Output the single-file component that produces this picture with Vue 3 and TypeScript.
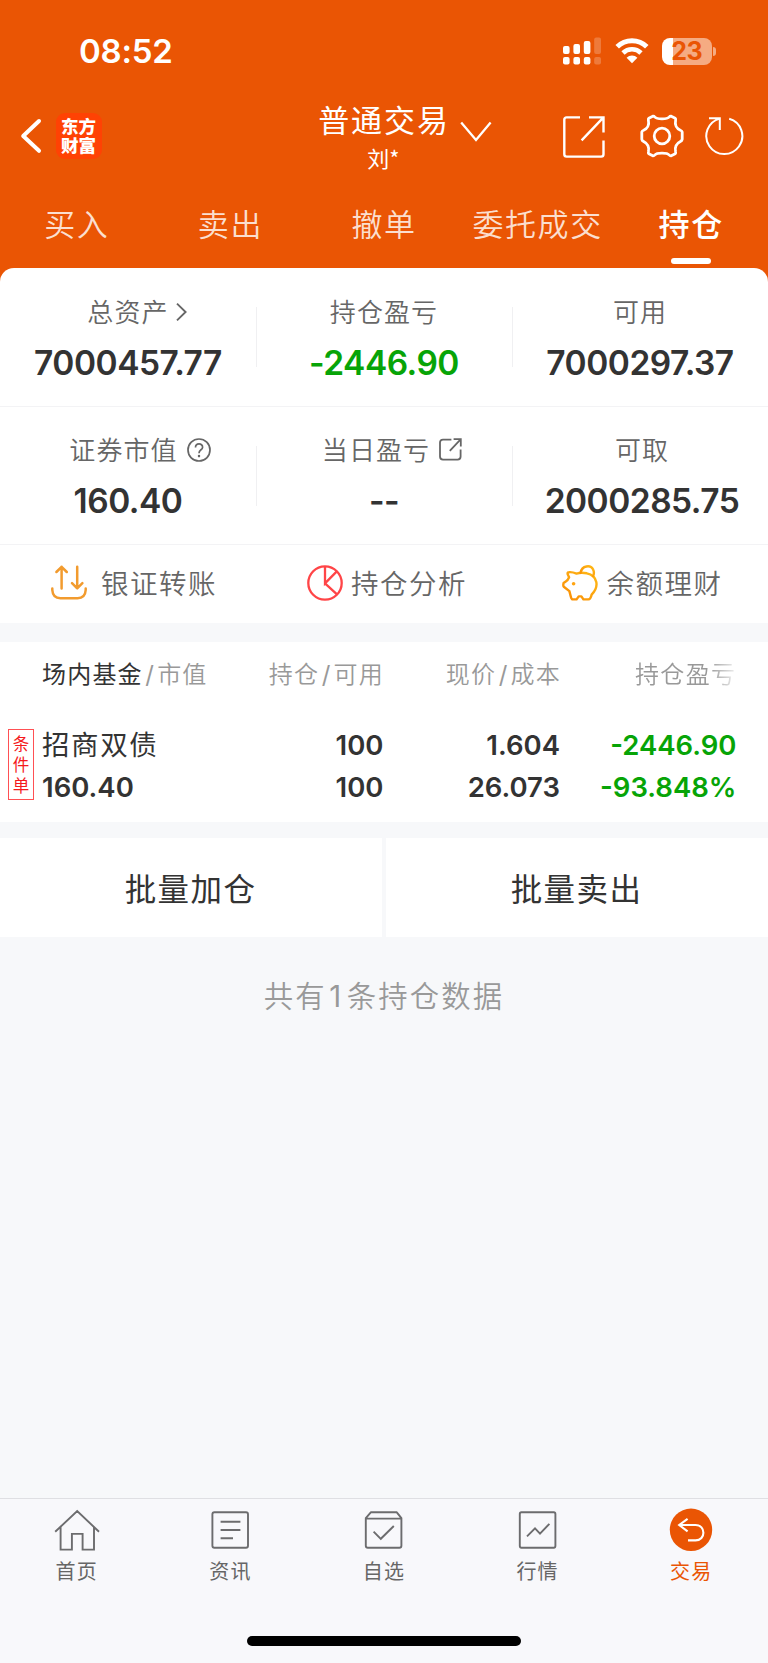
<script setup lang="ts">
interface Cell { label: string; value: string; icon?: 'chevron' | 'help' | 'open'; down?: boolean; cls: string }

const tabs: string[] = ['买入', '卖出', '撤单', '委托成交', '持仓']
const activeTab = '持仓'

const rows: Cell[][] = [
  [
    { label: '总资产', value: '7000457.77', icon: 'chevron', cls: 'c-total' },
    { label: '持仓盈亏', value: '-2446.90', down: true, cls: 'c-profit' },
    { label: '可用', value: '7000297.37', cls: 'c-avail' },
  ],
  [
    { label: '证券市值', value: '160.40', icon: 'help', cls: 'c-market' },
    { label: '当日盈亏', value: '--', icon: 'open', cls: 'c-today' },
    { label: '可取', value: '2000285.75', cls: 'c-draw' },
  ],
]

const badge: string[] = ['条', '件', '单']
const nav: { id: string; label: string }[] = [
  { id: 'home', label: '首页' },
  { id: 'news', label: '资讯' },
  { id: 'pick', label: '自选' },
  { id: 'market', label: '行情' },
  { id: 'trade', label: '交易' },
]
</script>

<template>
  <div class="page">
    <header class="top">
      <div class="status">
        <span class="time">08:52</span>
        <div class="status-icons">
          <svg class="signal" width="39" height="28" viewBox="0 0 39 28" fill="#fff">
            <rect x="0" y="9" width="6.6" height="8" rx="2" />
            <rect x="10.4" y="7" width="6.6" height="10" rx="2" />
            <rect x="20.8" y="4" width="6.6" height="13" rx="2" />
            <rect x="0" y="20" width="6.6" height="7.6" rx="2" />
            <rect x="10.4" y="20" width="6.6" height="7.6" rx="2" />
            <rect x="20.8" y="20" width="6.6" height="7.6" rx="2" />
            <g opacity=".22">
              <rect x="31.2" y="0.4" width="6.8" height="16.6" rx="2" />
              <rect x="31.2" y="20" width="6.8" height="7.6" rx="2" />
            </g>
          </svg>
          <svg class="wifi" width="34" height="26" viewBox="0 0 34 26">
            <path d="M2.2 8.8A21 21 0 0 1 31.8 8.8" fill="none" stroke="#fff" stroke-width="5" />
            <path d="M8 15A12.8 12.8 0 0 1 26 15" fill="none" stroke="#fff" stroke-width="4.6" />
            <path d="M17 25.2L11.6 19.8A7.7 7.7 0 0 1 22.4 19.8Z" fill="#fff" />
          </svg>
          <div class="battery"><span>23</span></div>
          <i class="nub"></i>
        </div>
      </div>

      <div class="bar">
        <svg class="back" width="22" height="36" viewBox="0 0 22 36" fill="none" stroke="#fff" stroke-width="4" stroke-linecap="round" stroke-linejoin="round">
          <path d="M19 3L3.2 18L19 32.8" />
        </svg>
        <div class="logo"><span>东方<br>财富</span></div>
        <div class="account">
          <span class="account-name">普通交易</span>
          <span class="account-user">刘*</span>
        </div>
        <svg class="down" width="32" height="22" viewBox="0 0 32 22" fill="none" stroke="#fff" stroke-width="2.3">
          <path d="M1.2 1.4L16 19L30.6 1.4" />
        </svg>
        <svg class="share" width="42" height="42" viewBox="0 0 42 42" fill="none" stroke="#fff" stroke-width="2.4">
          <path d="M17 1.4H3.6Q1.3 1.4 1.3 3.7V38.3Q1.3 40.6 3.6 40.6H38.2Q40.5 40.6 40.5 38.3V24.4" />
          <path d="M26 1.4H40.5V16.6M40.5 1.4L18.6 24.4" />
        </svg>
        <svg class="gear" width="46" height="46" viewBox="-23 -23 46 46" fill="none" stroke="#fff" stroke-width="2.8" stroke-linejoin="round">
          <path d="M-13.2 -17.8L-9.2 -19.8Q-8 -20 -7.2 -19C-5.2 -16.4 5.2 -16.4 7.2 -19Q8 -20 9.2 -19.8L13.2 -17.8Q14 -17 13.6 -15.6C12.6 -11.2 14.6 -7.4 18.4 -5.8Q20 -5.2 20.2 -4V3.2Q20 4.6 18.4 5.4C14.6 7.4 12.6 11.2 13.6 15.6Q14 17 13.2 17.8L9.2 19.8Q8 20 7.2 19C5.2 16.4 -5.2 16.4 -7.2 19Q-8 20 -9.2 19.8L-13.2 17.8Q-14 17 -13.6 15.6C-12.6 11.2 -14.6 7.4 -18.4 5.4Q-20 4.6 -20.2 3.2V-4Q-20 -5.2 -18.4 -5.8C-14.6 -7.4 -12.6 -11.2 -13.6 -15.6Q-14 -17 -13.2 -17.8Z" />
          <circle r="7.8" />
        </svg>
        <svg class="refresh" width="40" height="42" viewBox="-20 -21 40 42" fill="none" stroke="#fff" stroke-width="2">
          <path d="M4.2 -17.3A18 18 0 1 1 -5.2 -17.4M-16 -17.7H-5.2V-6" />
        </svg>
      </div>

      <nav class="tabs">
        <div v-for="t in tabs" :key="t" class="tab" :class="{ active: t === activeTab }"><span>{{ t }}</span></div>
      </nav>
    </header>

    <section class="summary">
      <div class="card">
        <div v-for="(row, i) in rows" :key="i" class="row">
          <div v-for="c in row" :key="c.label" class="cell" :class="c.cls">
            <div class="label">
              <span>{{ c.label }}</span>
              <svg v-if="c.icon === 'chevron'" class="i-chev" width="12" height="20" viewBox="0 0 12 20" fill="none" stroke="#666" stroke-width="1.9">
                <path d="M1 1.6L9.6 10L1 18.4" />
              </svg>
              <svg v-else-if="c.icon === 'help'" class="i-help" width="24" height="24" viewBox="0 0 24 24" fill="none" stroke="#666" stroke-width="1.7">
                <circle cx="12" cy="12" r="11" />
                <path d="M8.5 9.6C8.5 4.6 15.6 4.9 15.6 9.2C15.6 12 12 11.6 12 15.2" />
                <path d="M12 16.9V19.2" stroke-width="2.2" />
              </svg>
              <svg v-else-if="c.icon === 'open'" class="i-open" width="23" height="23" viewBox="0 0 23 23" fill="none" stroke="#666" stroke-width="1.8">
                <path d="M12.4 1.6H4Q1 1.6 1 4.6V18.6Q1 21.6 4 21.6H18.6Q21.6 21.6 21.6 18.6V11.4M14.6 1.2H21.8V8.4M21.6 1.4L10.8 12.8" />
              </svg>
            </div>
            <div class="value" :class="{ green: c.down }">{{ c.value }}</div>
          </div>
        </div>
        <div class="actions">
          <div class="action a1">
            <svg width="36" height="36" viewBox="0 0 36 36" fill="none" stroke="#f29b2e" stroke-width="2.5" stroke-linecap="round" stroke-linejoin="round">
              <path d="M1.3 23.4V25Q1.8 33.2 9.4 33.2H26.6Q34.2 33.2 34.7 25V23.4M10.6 23.4V1.8M5.4 7L10.6 1.8L15.8 7M26.2 1.8V23.2M21 18.2L26.2 23.4L31.4 18.2" />
            </svg>
            <span>银证转账</span>
          </div>
          <div class="action a2">
            <svg width="36" height="36" viewBox="0 0 36 36" fill="none" stroke="#ff4547" stroke-width="2.3">
              <circle cx="18" cy="18" r="16.7" />
              <path d="M18 1.4V18.4L29.8 6.4M18 18.4L30 29.4" />
            </svg>
            <span>持仓分析</span>
          </div>
          <div class="action a3">
            <svg width="36" height="36" viewBox="0 0 36 36" fill="none" stroke="url(#pig)" stroke-width="2.4" stroke-linecap="round" stroke-linejoin="round">
              <defs>
                <linearGradient id="pig" x1="0" y1="1" x2="1" y2="0"><stop stop-color="#f98c05" /><stop offset="1" stop-color="#ffba17" /></linearGradient>
              </defs>
              <path d="M7 7.2Q5.2 7.2 5.7 9.2L7.1 12.2Q5.8 15.3 4.1 16.3L1.6 18Q.9 20.6 1.8 21.7L7.4 26.1L8.7 31.2Q9.4 34.4 10.8 34.4H14.6L16.7 31.4H19.4L21.4 34.4H26.3Q28.7 34.2 29.6 29.7C37.5 21.6 35.8 10.8 24.8 8.3C20.6 7.5 17.8 7.6 14.5 8.6Q10.4 6.9 7 7.2Z" />
              <path d="M18.6 7.7C20 .2 28.6 -.2 31 4.2Q32.8 7.8 31 11.1" />
              <circle cx="11.6" cy="18.7" r="1.8" fill="#ffa411" stroke="none" />
            </svg>
            <span>余额理财</span>
          </div>
        </div>
      </div>
    </section>

    <section class="holdings">
      <div class="thead">
        <span class="col first"><b>场内基金</b><i>/</i>市值</span>
        <span class="col">持仓<i>/</i>可用</span>
        <span class="col">现价<i>/</i>成本</span>
        <span class="col fade">持仓盈亏</span>
      </div>
      <div class="holding">
        <div class="badge"><span v-for="b in badge" :key="b">{{ b }}</span></div>
        <div class="pair first"><span class="name">招商双债</span><span>160.40</span></div>
        <div class="pair"><span>100</span><span>100</span></div>
        <div class="pair"><span>1.604</span><span>26.073</span></div>
        <div class="pair green"><span>-2446.90</span><span>-93.848%</span></div>
      </div>
    </section>

    <section class="batch">
      <button type="button">批量加仓</button>
      <button type="button">批量卖出</button>
    </section>

    <p class="count">共有<span>1</span>条持仓数据</p>

    <footer class="bottom">
      <div class="menu">
        <div v-for="n in nav" :key="n.id" class="item" :class="n.id">
          <svg width="46" height="46" viewBox="0 0 46 46" fill="none" stroke="#6c6c6e" stroke-width="1.9">
            <path v-if="n.id === 'home'" d="M1.2 24.8L23.2 4L45 24.8M6.6 20.2V42.6H17.9V26.9H28.6V42.6H40V20.2" />
            <g v-else-if="n.id === 'news'">
              <rect x="5.4" y="5.3" width="35.6" height="35.4" rx="2" />
              <path d="M13.6 14.8H33.4M13.6 23H33.4M13.6 31.2H26" />
            </g>
            <g v-else-if="n.id === 'pick'">
              <path d="M9.8 5.3H35.8L40.4 11.2V38.7Q40.4 40.7 38.4 40.7H6.8Q4.8 40.7 4.8 38.7V11.2ZM4.8 11.6H40.4" stroke-linejoin="round" />
              <path d="M12.6 24.6L19.8 31.8L32.8 19" />
            </g>
            <g v-else-if="n.id === 'market'">
              <rect x="4.8" y="5.3" width="35.6" height="35.4" rx="1.6" />
              <path d="M12 29.4L20 21.4L25 26.6L34.4 16.8" />
            </g>
            <g v-else>
              <circle cx="23" cy="22.8" r="21.2" fill="#ea5504" stroke="none" />
              <path d="M19.6 11.8L11.2 18L19.6 24.4M11.6 18H27.6C38 18 38 33.4 27.6 33.4H20" stroke="#fff" stroke-width="2.1" />
            </g>
          </svg>
          <span>{{ n.label }}</span>
        </div>
      </div>
      <div class="home-bar"></div>
    </footer>
  </div>
</template>

<style>
html, body { margin: 0; background: #f7f8fa; }
</style>

<style scoped>
.page {
  width: 768px;
  height: 1663px;
  display: flex;
  flex-direction: column;
  overflow: hidden;
  background: #f7f8fa;
  font-family: "Noto Sans CJK SC", sans-serif;
  color: #333;
}
svg { display: block; flex: none; }
.top { height: 268px; background: #ea5504; color: #fff; flex: none; }
.status { height: 102px; display: flex; justify-content: space-between; align-items: center; padding: 0 52px 0 79px; box-sizing: border-box; }
.time { font: 600 33px/40px Inter, sans-serif; letter-spacing: -.2px; }
.status-icons { display: flex; align-items: center; }
.wifi { margin: 0 13.5px 0 13px; }
.battery {
  width: 49.5px; height: 27px; border-radius: 8px;
  background: linear-gradient(90deg, #fff 11.5px, #f5ab82 11.5px);
  display: flex; align-items: center; justify-content: center;
}
.battery span { font: 700 25px/27px Inter, sans-serif; color: #ea5504; letter-spacing: -.4px; }
.nub { width: 3px; height: 9px; border-radius: 0 4px 4px 0; background: #f5ab82; margin-left: 1.5px; }
.signal { margin-left: -1px; }

.bar { height: 78px; display: flex; align-items: center; padding: 0 0 0 20px; box-sizing: border-box; position: relative; top: -5px; }
.logo {
  width: 46px; height: 46px; margin-left: 13.5px; margin-top: -1px; border-radius: 9px; background: #ff4204;
  display: flex; align-items: center; justify-content: center;
  font: 900 17.5px/19px "Noto Sans CJK SC", sans-serif; flex: none;
}
.logo span { margin-top: -2px; }
.account { display: flex; flex-direction: column; align-items: center; margin-left: 216.5px; width: 132px; flex: none; }
.account-name { font-size: 31px; line-height: 40px; letter-spacing: 1.9px; white-space: nowrap; }
.account-user { font-size: 22px; line-height: 32px; margin-top: 2px; padding-right: 1px; }
.down { margin: -8px 0 0 9.5px; }
.share { margin-left: 71px; margin-top: 2px; }
.gear { margin-left: 34.5px; }
.refresh { margin-left: 19.5px; }

.tabs { display: flex; height: 88px; }
.tab { flex: 1; display: flex; flex-direction: column; align-items: center; padding-top: 21px; box-sizing: border-box; color: rgba(255, 255, 255, .82); font-size: 31px; letter-spacing: 1.6px; line-height: 44px; font-weight: 350; }
.tab.active { color: #fff; font-weight: 500; }
.tab.active::after { content: ''; width: 40px; height: 6px; border-radius: 3px; background: #fff; margin-top: 13px; }

.summary { background: linear-gradient(#ea5504 20px, #fff 20px); flex: none; }
.card { background: #fff; border-radius: 14px 14px 0 0; height: 355px; }
.row { display: flex; height: 139px; border-bottom: 1px solid #f3f3f5; box-sizing: border-box; }
.row + .row { height: 138px; }
.cell { width: 256px; height: 100%; display: flex; flex-direction: column; align-items: center; padding-top: 24px; box-sizing: border-box; position: relative; }
.row + .row .cell { padding-top: 23px; }
.cell + .cell::before { content: ''; position: absolute; left: 0; top: 39px; width: 1px; height: 60px; background: #f0f0f2; }
.label { display: flex; align-items: center; height: 38px; font-size: 26px; line-height: 38px; letter-spacing: 1.1px; color: #666; font-weight: 350; }
.value { font: 600 33.5px/40px Inter, sans-serif; letter-spacing: -.5px; margin-top: 13px; }
.green { color: #07a407; }
.i-chev { margin: 1px 1px 0 7px; }
.i-help { margin-left: 9px; margin-top: 1px; }
.i-open { margin-left: 9px; margin-top: 1px; }
.c-total .label { padding-left: 20px; }
.c-market .label { padding-left: 24px; }
.c-today .label { padding-left: 16px; }
.c-draw { padding-left: 4px; }

.actions { display: flex; height: 76px; }
.action { width: 256px; display: flex; align-items: center; font-size: 27.5px; letter-spacing: 1.5px; color: #666; box-sizing: border-box; font-weight: 350; }
.action span { line-height: 40px; margin-top: -3px; }
.a1 { padding-left: 50.5px; gap: 14.5px; }
.a2 { padding-left: 50.5px; gap: 8.5px; }
.a3 { padding-left: 49.5px; gap: 9px; }

.holdings { margin-top: 19px; height: 180px; background: #fff; flex: none; }
.thead { display: flex; height: 64px; align-items: center; padding: 0 0 4px 42px; box-sizing: border-box; font-size: 24px; letter-spacing: 1.2px; color: #999; font-weight: 350; }
.thead b { color: #333; font-weight: 400; }
.thead i { font: 400 24px/30px Inter, sans-serif; margin: 0 2px 0 2.5px; }
.thead .col { width: 177px; text-align: right; white-space: nowrap; }
.thead .first { width: 165px; text-align: left; }
.thead .fade { width: 175.5px; letter-spacing: 1.4px; -webkit-mask-image: linear-gradient(90deg, #000 148px, transparent 180px); mask-image: linear-gradient(90deg, #000 148px, transparent 180px); }
.holding { display: flex; height: 116px; }
.badge {
  width: 26px; height: 71px; margin: 23px 0 0 8px; box-sizing: border-box; border: 1px solid #ff5053; color: #f5191d;
  display: flex; flex-direction: column; align-items: center; justify-content: center; font-size: 16.5px; line-height: 21px; flex: none;
}
.pair { width: 176.5px; display: flex; flex-direction: column; align-items: flex-end; padding-top: 18px; box-sizing: border-box; font: 600 27.5px/42px Inter, sans-serif; }
.pair.first { width: 165px; margin-left: 8px; align-items: flex-start; }
.pair .name { font: 400 27.5px/42px "Noto Sans CJK SC", sans-serif; letter-spacing: 1.6px; margin-top: -2px; padding-bottom: 2px; }

.batch { margin-top: 16px; display: flex; gap: 4px; height: 99px; flex: none; }
.batch button { flex: 1; border: 0; padding: 0 1px 2px 0; background: #fff; color: #333; font: 400 31.5px/44px "Noto Sans CJK SC", sans-serif; letter-spacing: 1.4px; }
.count { margin: 35px 0 0; text-align: center; font-size: 29.4px; line-height: 44px; letter-spacing: 2.1px; color: #999; font-weight: 350; }
.count span { margin: 0 3.5px 0 2.5px; font-family: Inter, sans-serif; font-weight: 400; }

.bottom { margin-top: auto; height: 165px; box-sizing: border-box; border-top: 1px solid #dfdfe3; background: #f8f8fb; display: flex; flex-direction: column; align-items: center; }
.menu { display: flex; width: 100%; }
.item { flex: 1; display: flex; flex-direction: column; align-items: center; padding-top: 8px; color: #666; }
.item span { font-size: 20px; line-height: 28px; letter-spacing: 1.2px; margin-top: 4px; }
.item.trade span { color: #ea5504; }
.home-bar { width: 274px; height: 10px; border-radius: 5px; background: #000; margin-top: 51px; }
</style>
